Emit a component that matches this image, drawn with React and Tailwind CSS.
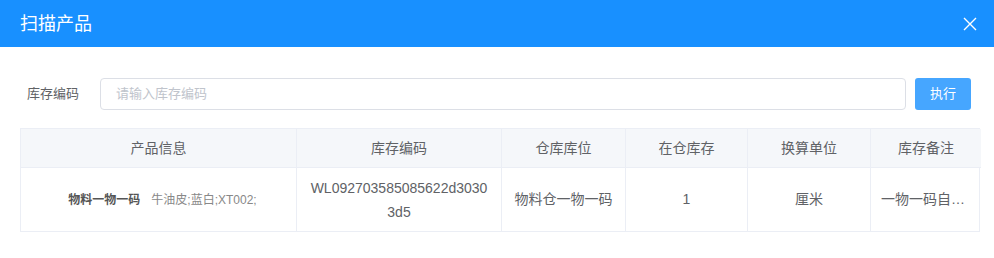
import React from "react";

const cols = ["产品信息", "库存编码", "仓库库位", "在仓库存", "换算单位", "库存备注"];

export default function App() {
  return (
    <div
      className="w-[994px] h-[258px] bg-white"
      style={{ fontFamily: '"Liberation Sans", "Noto Sans CJK SC", sans-serif' }}
    >
      <div className="h-[47px] bg-[#1890ff] flex items-center justify-between pl-5 pr-[17px]">
        <span className="text-white text-[18px] leading-none">扫描产品</span>
        <svg width="14" height="14" viewBox="0 0 14 14" className="text-white">
          <path d="M1 1L13 13M13 1L1 13" stroke="currentColor" strokeWidth="1.4" />
        </svg>
      </div>
      <div className="flex items-center pt-[31px] pl-[27px]">
        <span className="text-[13px] text-[#606266] w-[73px]">库存编码</span>
        <div className="w-[806px] h-[32px] border border-[#dcdfe6] rounded-[4px] flex items-center px-[15px] text-[13px] text-[#c0c4cc]">
          请输入库存编码
        </div>
        <button className="ml-[9px] w-[56px] h-[32px] rounded-[3px] bg-[#46a6ff] text-white text-[13px]">
          执行
        </button>
      </div>
      <div className="mt-[18px] ml-5 w-[960px] border border-[#ebeef5] grid grid-cols-[276px_205px_124px_122px_123px_110px] text-[14px] text-[#606266]">
        {cols.map((c, i) => (
          <div
            key={c}
            className={`h-[39px] bg-[#f5f7fa] flex items-center justify-center border-b border-[#ebeef5] ${i < 5 ? "border-r" : ""}`}
          >
            {c}
          </div>
        ))}
        <div className="h-[63px] flex items-center justify-center border-r border-[#ebeef5] text-[12px] pl-[8px]">
          <span className="font-bold text-[#555]">物料一物一码</span>
          <span className="ml-[11px] text-[#888]">牛油皮;蓝白;XT002;</span>
        </div>
        <div className="h-[63px] flex items-center justify-center border-r border-[#ebeef5] text-center leading-[24px] px-[10px] break-all">
          WL092703585085622d3030 3d5
        </div>
        <div className="h-[63px] flex items-center justify-center border-r border-[#ebeef5]">物料仓一物一码</div>
        <div className="h-[63px] flex items-center justify-center border-r border-[#ebeef5]">1</div>
        <div className="h-[63px] flex items-center justify-center border-r border-[#ebeef5]">厘米</div>
        <div className="h-[63px] flex items-center justify-center px-[10px] min-w-0">
          <span className="truncate">一物一码自动生成</span>
        </div>
      </div>
    </div>
  );
}
